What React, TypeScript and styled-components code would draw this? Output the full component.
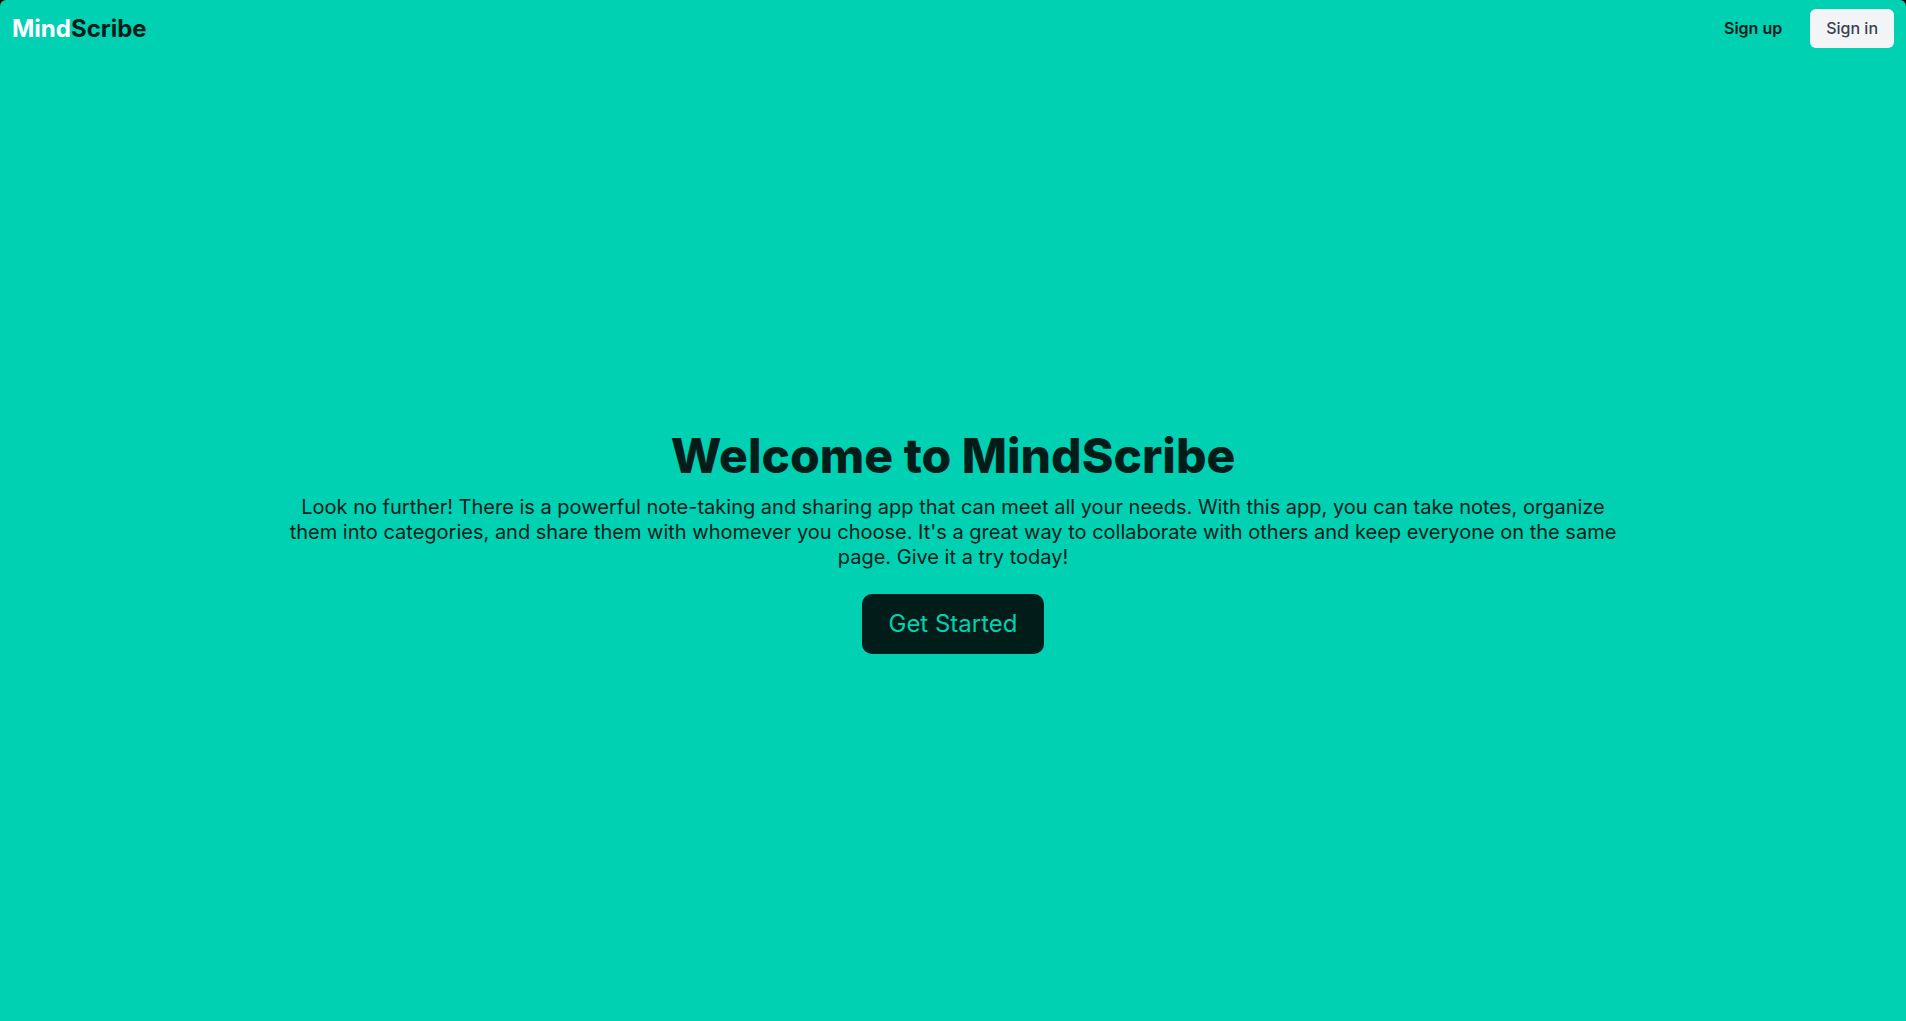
import React from "react";
import styled, { createGlobalStyle } from "styled-components";

const GlobalStyle = createGlobalStyle`
  html, body {
    margin: 0;
    padding: 0;
    background: #000;
  }
  body {
    font-family: Inter, "Noto Sans", "Liberation Sans", sans-serif;
  }
  * { box-sizing: border-box; }
`;

const DARK = "#011d1a";
const TEAL = "#00d1b2";

const Page = styled.div`
  min-height: 100vh;
  background: ${TEAL};
  border-radius: 6px 6px 0 0;
  display: flex;
  flex-direction: column;
`;

const Header = styled.header`
  height: 56px;
  padding: 0 12px;
  display: flex;
  align-items: center;
  justify-content: space-between;
`;

const Logo = styled.a`
  font-size: 24px;
  font-weight: 700;
  color: ${DARK};
  text-decoration: none;
`;

const LogoPart = styled.span<{ $light?: boolean }>`
  color: ${(p) => (p.$light ? "#ffffff" : DARK)};
`;

const Nav = styled.nav`
  display: flex;
  align-items: center;
  gap: 12px;
`;

const NavButton = styled.button<{ $filled?: boolean }>`
  font-family: inherit;
  font-size: 16px;
  line-height: 23px;
  font-weight: ${(p) => (p.$filled ? 500 : 600)};
  color: ${(p) => (p.$filled ? "#374151" : DARK)};
  background: ${(p) => (p.$filled ? "#f3f4f6" : "transparent")};
  border: none;
  border-radius: 6px;
  padding: 8px 16px;
  cursor: pointer;
`;

const Main = styled.main`
  flex: 1;
  display: flex;
  flex-direction: column;
  align-items: center;
  justify-content: center;
  padding: 8px 0 0;
  text-align: center;
`;

const Title = styled.h1`
  margin: 0;
  font-size: 48px;
  line-height: 48px;
  font-weight: 800;
  color: ${DARK};
`;

const Lead = styled.p`
  margin: 15px 0 0;
  max-width: 1340px;
  font-size: 20px;
  line-height: 25px;
  font-weight: 400;
  color: ${DARK};
`;

const CTA = styled.button`
  margin-top: 24px;
  height: 60px;
  padding: 0 26px;
  font-family: inherit;
  font-size: 24px;
  font-weight: 400;
  color: ${TEAL};
  background: ${DARK};
  border: none;
  border-radius: 10px;
  cursor: pointer;
`;

export default function App() {
  return (
    <>
      <GlobalStyle />
      <Page>
        <Header>
          <Logo href="#">
            <LogoPart $light>Mind</LogoPart>
            <LogoPart>Scribe</LogoPart>
          </Logo>
          <Nav>
            <NavButton>Sign up</NavButton>
            <NavButton $filled>Sign in</NavButton>
          </Nav>
        </Header>
        <Main>
          <Title>Welcome to MindScribe</Title>
          <Lead>
            Look no further! There is a powerful note-taking and sharing app that can meet all your
            needs. With this app, you can take notes, organize them into categories, and share them
            with whomever you choose. It's a great way to collaborate with others and keep everyone
            on the same page. Give it a try today!
          </Lead>
          <CTA>Get Started</CTA>
        </Main>
      </Page>
    </>
  );
}
